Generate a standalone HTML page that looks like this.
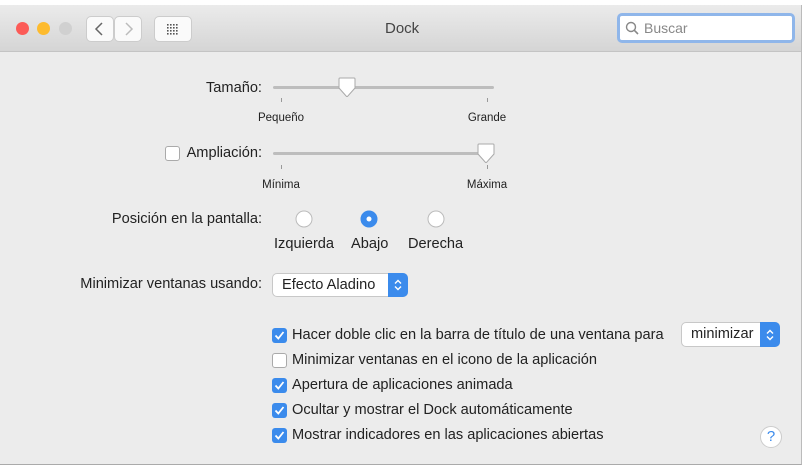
<!DOCTYPE html>
<html><head><meta charset="utf-8"><style>
*{margin:0;padding:0;box-sizing:border-box}
body{width:806px;height:469px;background:#fff;position:relative;overflow:hidden;font-family:"Liberation Sans",sans-serif;color:#222}
.win{position:absolute;left:0;top:5px;width:802px;height:460px;background:#ececec;border-right:1px solid #bbb;border-bottom:1px solid #aaa}
.tb{position:absolute;left:0;top:0;width:100%;height:47px;background:linear-gradient(#ebebeb,#d5d5d5);border-bottom:1px solid #c4c4c4}
.a{position:absolute;white-space:nowrap}
.dot{position:absolute;width:13px;height:13px;border-radius:50%;top:18px}
.btn{position:absolute;background:#fafafa;border:1px solid #ccc;border-radius:5px;top:11px;height:26px}
.lbl{font-size:14.6px;transform:translateY(-50%)}
.r{text-align:right;width:262px;left:0}
.small{font-size:11.5px;transform:translate(-50%,-50%)}
.track{position:absolute;height:3px;background:#bdbdbd;border-radius:2px;left:273px;width:221px}
.tick{position:absolute;width:1px;height:4px;background:#999}
.knob{position:absolute;width:18px;height:20px}
.radio{position:absolute;width:17px;height:17px;border-radius:50%;background:#fff;border:1px solid #bbb;transform:translate(-50%,-50%)}
.cb{position:absolute;width:15px;height:15px;border-radius:3px;left:272px}
.on{background:#3b8bec}
.off{background:#fff;border:1px solid #aaa}
.pop{position:absolute;background:#fff;border:1px solid #c8c8c8;border-radius:5px;font-size:14.6px;padding-left:9px;line-height:22px}
.ar{position:absolute;right:-1px;top:-1px;width:20px;bottom:-1px;background:#3b8bec;border-radius:0 5px 5px 0}
.ar svg{position:absolute;left:5px;top:50%;margin-top:-6px}
</style></head><body>
<div class="win">
<div class="tb">
<div class="dot" style="left:16px;background:#fc5b57;top:17px"></div>
<div class="dot" style="left:37px;background:#fdbb2e;top:17px"></div>
<div class="dot" style="left:59px;background:#d0d0d0;top:17px"></div>
<div class="btn" style="left:86px;width:28px"><svg width="26" height="24"><path d="M15 6L9 12L15 18" stroke="#666" stroke-width="1.5" fill="none"/></svg></div>
<div class="btn" style="left:114px;width:28px"><svg width="26" height="24"><path d="M11 6L17 12L11 18" stroke="#bbb" stroke-width="1.5" fill="none"/></svg></div>
<div class="btn" style="left:154px;width:38px"><svg width="36" height="24" fill="#555">
<rect x="12" y="7" width="1.6" height="1.6"/><rect x="15" y="7" width="1.6" height="1.6"/><rect x="18" y="7" width="1.6" height="1.6"/><rect x="21" y="7" width="1.6" height="1.6"/>
<rect x="12" y="10" width="1.6" height="1.6"/><rect x="15" y="10" width="1.6" height="1.6"/><rect x="18" y="10" width="1.6" height="1.6"/><rect x="21" y="10" width="1.6" height="1.6"/>
<rect x="12" y="13" width="1.6" height="1.6"/><rect x="15" y="13" width="1.6" height="1.6"/><rect x="18" y="13" width="1.6" height="1.6"/><rect x="21" y="13" width="1.6" height="1.6"/>
<rect x="12" y="16" width="1.6" height="1.6"/><rect x="15" y="16" width="1.6" height="1.6"/><rect x="18" y="16" width="1.6" height="1.6"/><rect x="21" y="16" width="1.6" height="1.6"/></svg></div>
<div class="a" style="left:385px;top:15px;font-size:15px;color:#444">Dock</div>
<div class="a" style="left:617px;top:8px;width:178px;height:30px;background:#fff;border:3px solid #8fb6ea;border-radius:5px;font-size:14px;color:#888;line-height:24px;padding-left:24px">Buscar
<svg style="position:absolute;left:5px;top:5px" width="14" height="14"><circle cx="6" cy="6" r="4.5" fill="none" stroke="#888" stroke-width="1.4"/><path d="M9.3 9.3L13 13" stroke="#888" stroke-width="1.6"/></svg></div>
</div>
</div>
<div class="a lbl r" style="top:88px">Tamaño:</div>
<div class="track" style="top:86px"></div>
<svg class="knob" style="left:338px;top:77px" width="18" height="22"><path d="M2 1H16Q17 1 17 2V11L9 20L1 11V2Q1 1 2 1Z" fill="#fff" stroke="#aaa"/></svg>
<div class="tick" style="left:281px;top:98px"></div><div class="tick" style="left:487px;top:98px"></div>
<div class="a small" style="left:281px;top:118px">Pequeño</div>
<div class="a small" style="left:487px;top:118px">Grande</div>

<div class="cb off" style="left:165px;top:146px"></div>
<div class="a lbl r" style="top:153px">Ampliación:</div>
<div class="track" style="top:152px"></div>
<svg class="knob" style="left:477px;top:143px" width="18" height="22"><path d="M2 1H16Q17 1 17 2V11L9 20L1 11V2Q1 1 2 1Z" fill="#fff" stroke="#aaa"/></svg>
<div class="tick" style="left:281px;top:165px"></div><div class="tick" style="left:487px;top:165px"></div>
<div class="a small" style="left:281px;top:185px">Mínima</div>
<div class="a small" style="left:487px;top:185px">Máxima</div>

<div class="a lbl r" style="top:219px">Posición en la pantalla:</div>
<div class="radio" style="left:304px;top:219px"></div>
<div class="radio" style="left:369px;top:219px;background:#3b8bec;border-color:#3b8bec"><div style="position:absolute;left:5px;top:5px;width:5px;height:5px;border-radius:50%;background:#fff"></div></div>
<div class="radio" style="left:436px;top:219px"></div>
<div class="a lbl" style="left:274px;top:244px">Izquierda</div>
<div class="a lbl" style="left:351px;top:244px">Abajo</div>
<div class="a lbl" style="left:408px;top:244px">Derecha</div>

<div class="a lbl r" style="top:284px">Minimizar ventanas usando:</div>
<div class="pop" style="left:272px;top:273px;width:136px;height:24px">Efecto Aladino<div class="ar"><svg width="10" height="12"><path d="M2 4.5L5 1.5L8 4.5M2 7.5L5 10.5L8 7.5" stroke="#fff" stroke-width="1.4" fill="none"/></svg></div></div>

<div class="cb on" style="top:328px"><svg width="15" height="15"><path d="M3.5 7.5L6.3 10.5L11.5 4" stroke="#fff" stroke-width="1.8" fill="none"/></svg></div>
<div class="a lbl" style="left:292px;top:335px">Hacer doble clic en la barra de título de una ventana para</div>
<div class="pop" style="left:681px;top:322px;width:99px;height:25px">minimizar<div class="ar"><svg width="10" height="12"><path d="M2 4.5L5 1.5L8 4.5M2 7.5L5 10.5L8 7.5" stroke="#fff" stroke-width="1.4" fill="none"/></svg></div></div>
<div class="cb off" style="top:353px"></div>
<div class="a lbl" style="left:292px;top:360px">Minimizar ventanas en el icono de la aplicación</div>
<div class="cb on" style="top:378px"><svg width="15" height="15"><path d="M3.5 7.5L6.3 10.5L11.5 4" stroke="#fff" stroke-width="1.8" fill="none"/></svg></div>
<div class="a lbl" style="left:292px;top:385px">Apertura de aplicaciones animada</div>
<div class="cb on" style="top:403px"><svg width="15" height="15"><path d="M3.5 7.5L6.3 10.5L11.5 4" stroke="#fff" stroke-width="1.8" fill="none"/></svg></div>
<div class="a lbl" style="left:292px;top:410px">Ocultar y mostrar el Dock automáticamente</div>
<div class="cb on" style="top:428px"><svg width="15" height="15"><path d="M3.5 7.5L6.3 10.5L11.5 4" stroke="#fff" stroke-width="1.8" fill="none"/></svg></div>
<div class="a lbl" style="left:292px;top:435px">Mostrar indicadores en las aplicaciones abiertas</div>
<div class="a" style="left:760px;top:426px;width:22px;height:22px;border-radius:50%;background:#fff;border:1px solid #ccc;color:#3b8bec;font-size:15px;text-align:center;line-height:20px">?</div>
</body></html>
